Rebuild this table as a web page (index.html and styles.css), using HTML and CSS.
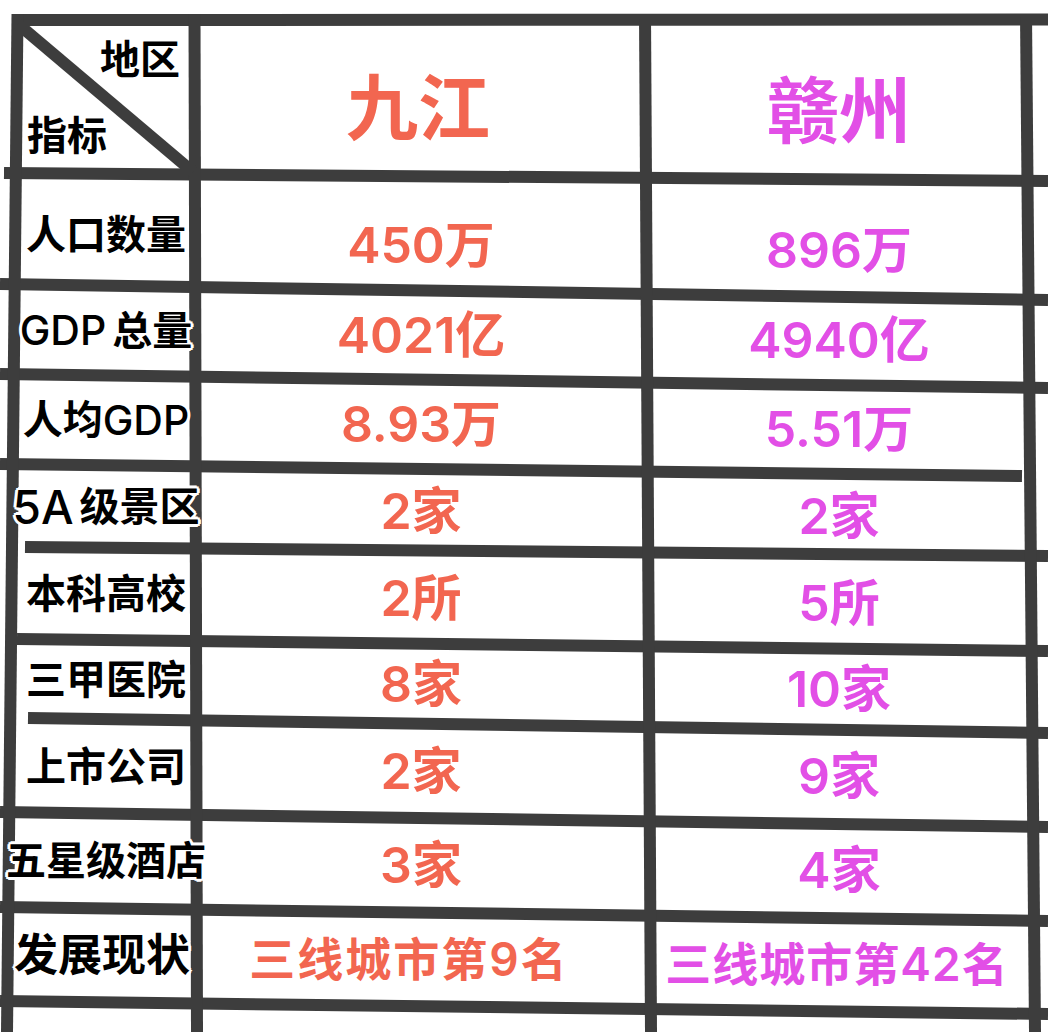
FILE: index.html
```html
<!DOCTYPE html>
<html lang="zh-CN">
<head>
<meta charset="utf-8">
<title>九江 vs 赣州</title>
<link rel="stylesheet" href="styles.css">
</head>
<body>
<div class="sheet">
  <svg class="lines" viewBox="0 0 1048 1032" width="1048" height="1032" aria-hidden="true">
    <g stroke="#3d3d3d" stroke-width="12" fill="none">
      <line x1="12" y1="20" x2="1048" y2="19.5"/>
      <line x1="4" y1="173" x2="1048" y2="181"/>
      <line x1="0" y1="284" x2="1048" y2="300"/>
      <line x1="0" y1="374" x2="1048" y2="388"/>
      <line x1="0" y1="464" x2="1022" y2="476"/>
      <line x1="25" y1="547" x2="1048" y2="556"/>
      <line x1="17" y1="639" x2="1048" y2="651"/>
      <line x1="28" y1="718" x2="1048" y2="733"/>
      <line x1="0" y1="812" x2="1048" y2="827"/>
      <line x1="0" y1="907" x2="1048" y2="921"/>
      <line x1="0" y1="1001" x2="1048" y2="1014"/>
      <line x1="17.5" y1="14" x2="7" y2="1032"/>
      <line x1="194.5" y1="14" x2="197" y2="1032"/>
      <line x1="645" y1="14" x2="651" y2="1032"/>
      <line x1="1026" y1="14" x2="1035" y2="1032"/>
      <line x1="18" y1="24" x2="193" y2="172"/>
    </g>
  </svg>
  <div class="grid">
    <div class="cell corner">
      <span class="corner-region">地区</span>
      <span class="corner-metric">指标</span>
    </div>
    <div class="cell head jj">九江</div>
    <div class="cell head gz">赣州</div>

    <div class="cell label r1">人口数量</div>
    <div class="cell val jj r1">450万</div>
    <div class="cell val gz r1">896万</div>

    <div class="cell label"><span class="lat lat-before">GDP</span>总量</div>
    <div class="cell val jj">4021亿</div>
    <div class="cell val gz">4940亿</div>

    <div class="cell label">人均<span class="lat">GDP</span></div>
    <div class="cell val jj">8.93万</div>
    <div class="cell val gz">5.51万</div>

    <div class="cell label"><span class="lat lat-before lat-big">5A</span>级景区</div>
    <div class="cell val jj">2家</div>
    <div class="cell val gz">2家</div>

    <div class="cell label">本科高校</div>
    <div class="cell val jj">2所</div>
    <div class="cell val gz">5所</div>

    <div class="cell label">三甲医院</div>
    <div class="cell val jj">8家</div>
    <div class="cell val gz">10家</div>

    <div class="cell label">上市公司</div>
    <div class="cell val jj">2家</div>
    <div class="cell val gz">9家</div>

    <div class="cell label">五星级酒店</div>
    <div class="cell val jj">3家</div>
    <div class="cell val gz">4家</div>

    <div class="cell label label-big">发展现状</div>
    <div class="cell val status jj">三线城市第9名</div>
    <div class="cell val status gz">三线城市第42名</div>
  </div>
</div>
</body>
</html>
```

FILE: styles.css
```css
html, body {
  margin: 0;
  padding: 0;
  background: #ffffff;
}

body {
  font-family: Inter, "Noto Sans CJK SC", sans-serif;
}

.sheet {
  position: relative;
  width: 1048px;
  height: 1032px;
  overflow: hidden;
  background: #ffffff;
}

.lines {
  position: absolute;
  left: 0;
  top: 0;
  display: block;
}

.grid {
  position: relative;
  display: grid;
  padding: 20px 0 0 17px;
  grid-template-columns: 178px 452px 384px;
  grid-template-rows: 154px 112px 89px 90px 83px 92px 80px 94px 94px 94px;
}

.cell {
  display: flex;
  align-items: center;
  justify-content: center;
  white-space: nowrap;
  line-height: 1;
  box-sizing: border-box;
}

.corner {
  flex-direction: column;
  align-items: stretch;
  justify-content: flex-start;
  font-size: 40px;
  font-weight: 700;
  color: #000;
}

.corner-region {
  align-self: flex-end;
  margin: 20px 15px 0 0;
}

.corner-metric {
  align-self: flex-start;
  margin: 36px 0 0 10px;
}

.label {
  font-size: 40px;
  font-weight: 700;
  color: #000;
  text-shadow:
    3px 0 0 #fff, -3px 0 0 #fff, 0 3px 0 #fff, 0 -3px 0 #fff,
    2px 2px 0 #fff, -2px -2px 0 #fff, 2px -2px 0 #fff, -2px 2px 0 #fff;
}

.label-big {
  font-size: 44px;
  padding-right: 8px;
}

.lat {
  font-weight: 500;
  font-size: 41px;
}

.lat-big {
  font-size: 46px;
}

.lat-before {
  margin-right: 6px;
}

.head {
  font-size: 72px;
  font-weight: 700;
}

.val {
  font-size: 50px;
  font-weight: 600;
}

.status {
  font-size: 46px;
  letter-spacing: 2px;
}

.jj {
  color: #f26650;
  padding-top: 8px;
}

.gz {
  color: #e24fe6;
  padding-top: 18px;
}

.status.jj {
  padding-right: 24px;
}

.status.gz {
  letter-spacing: 1px;
  padding-right: 4px;
}

.head.jj {
  padding-top: 22px;
  padding-right: 6px;
}

.head.gz {
  padding-top: 28px;
}

.label.r1 {
  padding-top: 10px;
}

.val.jj.r1 {
  padding-top: 30px;
}

.val.gz.r1 {
  padding-top: 40px;
}
```
